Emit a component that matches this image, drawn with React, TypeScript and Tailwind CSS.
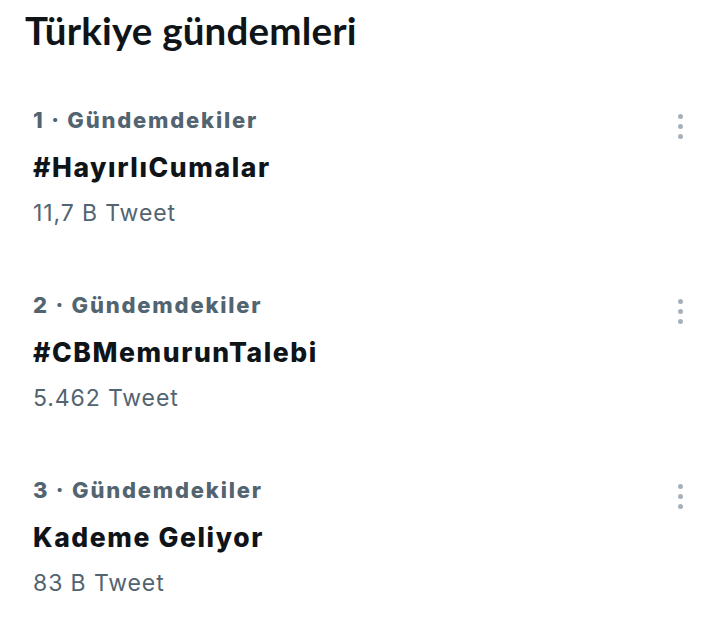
const trends = [
  { rank: 1, name: "#HayırlıCumalar", count: "11,7 B Tweet" },
  { rank: 2, name: "#CBMemurunTalebi", count: "5.462 Tweet" },
  { rank: 3, name: "Kademe Geliyor", count: "83 B Tweet" },
];

function MoreIcon() {
  return (
    <div className="flex flex-col items-center gap-[5px] pt-[9px]">
      <span className="w-[5px] h-[5px] rounded-full bg-[#a7b0b8]" />
      <span className="w-[5px] h-[5px] rounded-full bg-[#a7b0b8]" />
      <span className="w-[5px] h-[5px] rounded-full bg-[#a7b0b8]" />
    </div>
  );
}

export default function App() {
  return (
    <div className="w-[720px] h-[637px] bg-white overflow-hidden font-['Inter',sans-serif]">
      <h1 className="pl-[25px] pt-[6px] text-[38.5px] leading-[48px] font-bold text-[#0f1419] font-['Lato',sans-serif] tracking-[0.2px]">
        Türkiye gündemleri
      </h1>
      <div className="pt-[51px]">
        {trends.map((t) => (
          <div key={t.rank} className="flex justify-between pl-[33px] pr-[37px] h-[185px]">
            <div className="flex flex-col">
              <div className="text-[22px] leading-[30px] font-extrabold text-[#536471] tracking-[1.8px]">
                {t.rank} · Gündemdekiler
              </div>
              <div className="mt-[17px] text-[26.5px] leading-[30px] font-extrabold text-[#0f1419] tracking-[1.6px]">
                {t.name}
              </div>
              <div className="mt-[16px] text-[23px] leading-[30px] text-[#536471] tracking-[0.9px]">
                {t.count}
              </div>
            </div>
            <MoreIcon />
          </div>
        ))}
      </div>
    </div>
  );
}
